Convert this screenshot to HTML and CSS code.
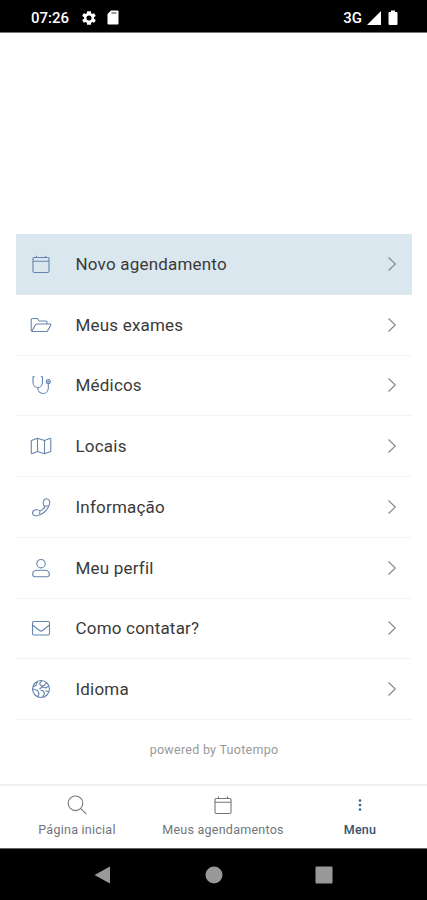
FILE: index.html
```html
<!DOCTYPE html>
<html lang="pt">

<head>
    <meta charset="utf-8" />
    <title>Menu</title>
    <link rel="stylesheet" href="styles.css">
</head>

<body>
    <header class="status-bar">
        <span class="clock">07:26</span>
        <svg class="status-gear" width="16" height="16" viewBox="0 0 24 24">
            <path fill="#fff" fill-rule="evenodd" d="M19.4 13l.1-1-.1-1 2.1-1.600.5-.6-2-3.500-.6-.3-2.500 1-1.700-1L14.900 2h-5.800l-.4 3-1.700 1-2.500-1-.6.3-2 3.500.5.6L4.600 11l-.1 1 .1 1-2.200 1.600-.5.6 2 3.500.6.300 2.500-1 1.700 1 .4 3h5.800l.4-3 1.700-1 2.500 1 .6-.3 2-3.500-.5-.6zM12 15.800a3.800 3.800 0 1 1 0-7.600 3.800 3.800 0 0 1 0 7.600z" />
        </svg>
        <svg class="status-card" width="12" height="15" viewBox="0 0 12 15">
            <path fill="#fff" d="M4 .5h6.500a1 1 0 0 1 1 1v12a1 1 0 0 1-1 1h-9a1 1 0 0 1-1-1V4z" />
            <path stroke="#777" stroke-width="1.5" d="M4.500 3h5" />
        </svg>
        <span class="network">3G</span>
        <svg class="signal" width="14" height="14" viewBox="0 0 14 14"><path fill="#fff" d="M14 0v14H0z" /></svg>
        <svg class="battery" width="10" height="16" viewBox="0 0 10 16"><path fill="#fff" d="M3 .5h4v1.500h1.500a1 1 0 0 1 1 1V14a1 1 0 0 1-1 1h-7a1 1 0 0 1-1-1V3a1 1 0 0 1 1-1H3z" /></svg>
    </header>

    <main class="content">
        <ul class="menu">
            <li class="menu-item active">
                <svg class="icon" viewBox="0 0 24 24"><path d="M5 5.500h14a1 1 0 0 1 1 1V19a1.500 1.500 0 0 1-1.500 1.500h-13A1.500 1.500 0 0 1 4 19V6.500a1 1 0 0 1 1-1zM4 9.300h16M7.500 5.500V3.800M16.500 5.500V3.800" /></svg>
                <span class="label">Novo agendamento</span>
                <svg class="chevron" viewBox="0 0 10 16"><path d="M1.500 1.500L8.300 8l-6.800 6.500" /></svg>
            </li>
            <li class="menu-item">
                <svg class="icon" viewBox="0 0 24 24"><path d="M3.500 18.500a1.500 1.500 0 0 1-1.300-1.500V7A1.500 1.500 0 0 1 3.700 5.500h4.600l2 2.500h6.200A1.500 1.500 0 0 1 18 9.500V11M3 18L6.300 12a2 2 0 0 1 1.500-1h13c1 0 1.300.7.9 1.400l-2.900 5a2 2 0 0 1-1.700 1.100H3.500" /></svg>
                <span class="label">Meus exames</span>
                <svg class="chevron" viewBox="0 0 10 16"><path d="M1.500 1.500L8.300 8l-6.800 6.500" /></svg>
            </li>
            <li class="menu-item">
                <svg class="icon" viewBox="0 0 24 24"><path d="M5.800 3.800H4V9c0 3.200 2 5.500 4.700 5.500S13.500 12.200 13.500 9V3.800h-1.800M8.700 14.500c0 3.600 2.200 6 5.300 6s5.300-2.300 5.300-5.500v-4.500" /><circle cx="19.300" cy="8.500" r="2" /><circle cx="19.300" cy="8.500" r=".5" /></svg>
                <span class="label">Médicos</span>
                <svg class="chevron" viewBox="0 0 10 16"><path d="M1.500 1.500L8.300 8l-6.800 6.500" /></svg>
            </li>
            <li class="menu-item">
                <svg class="icon" viewBox="0 0 24 24"><path d="M2.300 6.500L8.500 4.200l7 2.300 5-2c.8-.3 1.300.1 1.300.9v12.100l-6.300 2.300-7-2.300-5 2c-.8.300-1.200-.1-1.200-.9zM8.500 4.200v13.300M15.500 6.500v13.300" /></svg>
                <span class="label">Locais</span>
                <svg class="chevron" viewBox="0 0 10 16"><path d="M1.500 1.500L8.300 8l-6.800 6.500" /></svg>
            </li>
            <li class="menu-item">
                <svg class="icon" viewBox="0 0 24 24"><path d="M16 11.300c-2.600-.9-2.400-7.500 1.500-7.500 3.400 0 3.800 3.500 2.600 6.500-2 5-5.300 8.300-10.300 9.900-3.400 1.100-6.300.5-6.300-2.200 0-3.700 6-4.100 7.500-2 2.300-.9 4.200-2.500 5-4.700zM16 11.300l2.800-.6M11 16l-.5 2.800" /></svg>
                <span class="label">Informação</span>
                <svg class="chevron" viewBox="0 0 10 16"><path d="M1.500 1.500L8.300 8l-6.800 6.500" /></svg>
            </li>
            <li class="menu-item">
                <svg class="icon" viewBox="0 0 24 24"><circle cx="12" cy="7.700" r="4.200" /><path d="M8.500 14.300h7c2.800 0 4.800 1.600 4.800 4 0 1.500-.8 2.400-2.300 2.400H6c-1.500 0-2.300-.9-2.300-2.400 0-2.400 2-4 4.800-4z" /></svg>
                <span class="label">Meu perfil</span>
                <svg class="chevron" viewBox="0 0 10 16"><path d="M1.500 1.500L8.300 8l-6.800 6.500" /></svg>
            </li>
            <li class="menu-item">
                <svg class="icon" viewBox="0 0 24 24"><rect x="3.500" y="5.500" width="17" height="13.500" rx="1.200" /><path d="M3.500 9l7 5.500c1 .8 2 .8 3 0l7-5.500" /></svg>
                <span class="label">Como contatar?</span>
                <svg class="chevron" viewBox="0 0 10 16"><path d="M1.500 1.500L8.300 8l-6.800 6.500" /></svg>
            </li>
            <li class="menu-item">
                <svg class="icon" viewBox="0 0 24 24"><circle cx="12" cy="12" r="8.500" /><path d="M8.500 4.500L7.300 8l-3 2M4 12l4.500 1.500 1.500 3-1.200 3.500M13 3.600l-2.500 3 2 2.600 3-1 2-3M10.500 12l3-2.300 3 1.300 3.500-2M11.500 13l3 1 1 3-2.500 3M16.500 13.500l3.500 1.500" /></svg>
                <span class="label">Idioma</span>
                <svg class="chevron" viewBox="0 0 10 16"><path d="M1.500 1.500L8.300 8l-6.800 6.500" /></svg>
            </li>
        </ul>
        <p class="powered">powered by Tuotempo</p>
    </main>

    <nav class="tabs">
        <a class="tab tab-home">
            <svg class="tab-icon" viewBox="0 0 24 24"><circle cx="10.500" cy="10.300" r="7.300" /><path d="M15.800 15.600l5.500 5.500" /></svg>
            <span>Página inicial</span>
        </a>
        <a class="tab tab-agenda">
            <svg class="tab-icon" viewBox="0 0 24 24"><path d="M5 5.500h14a1 1 0 0 1 1 1V19a1.500 1.500 0 0 1-1.500 1.500h-13A1.500 1.500 0 0 1 4 19V6.500a1 1 0 0 1 1-1zM4 9.300h16M7.500 5.500V3.500M16.500 5.500V3.500" /></svg>
            <span>Meus agendamentos</span>
        </a>
        <a class="tab tab-menu">
            <svg class="tab-dots" viewBox="0 0 24 24"><circle cx="12" cy="7.500" r="1.300" /><circle cx="12" cy="12" r="1.300" /><circle cx="12" cy="16.500" r="1.300" /></svg>
            <span>Menu</span>
        </a>
    </nav>

    <footer class="system-nav">
        <svg class="nav-back" width="16" height="18" viewBox="0 0 16 18"><path d="M16 .5v17L.5 9z" /></svg>
        <svg class="nav-home" width="18" height="18" viewBox="0 0 18 18"><circle cx="9" cy="9" r="8.500" /></svg>
        <svg class="nav-recent" width="18" height="18" viewBox="0 0 18 18"><rect x=".5" y=".5" width="17" height="17" rx="1" /></svg>
    </footer>
</body>

</html>
```
FILE: styles.css
```css
* {
    box-sizing: border-box;
}

body {
    display: flex;
    flex-direction: column;
    height: 900px;
    margin: 0;
    font-family: Roboto, sans-serif;
    background-color: #fff;
    color: #3a3a3a;
}

.status-bar {
    display: flex;
    align-items: center;
    height: 33px;
    padding: 3px 29px 0 31px;
    background-color: #000;
    border-bottom: 1px solid #777;
    color: #fff;
    font-size: 15px;
    font-weight: 500;
}

.clock {
    width: 50px;
}

.status-card {
    margin-left: 10px;
}

.network {
    margin-left: auto;
}

.signal {
    margin-left: 5px;
}

.battery {
    margin-left: 7px;
}

.content {
    flex: 1;
    padding: 201px 15px 0 16px;
}

.menu {
    list-style: none;
    margin: 0;
    padding: 0;
}

.menu-item {
    display: flex;
    align-items: center;
    height: 60.75px;
    padding: 0 15.5px 0 12.5px;
    border-bottom: 1px solid #f3f3f3;
}

.menu-item.active {
    background-color: #dae7ee;
    border-bottom-color: #e2ecf1;
}

.icon {
    width: 24px;
    height: 24px;
    fill: none;
    stroke: #6685ad;
    stroke-width: 1.1;
    stroke-linejoin: round;
}

.label {
    flex: 1;
    margin-left: 23px;
    font-size: 17px;
    letter-spacing: 0.2px;
}

.chevron {
    width: 10px;
    height: 16px;
    fill: none;
    stroke: #858585;
    stroke-width: 1.1;
}

.powered {
    margin: 22px 0 0;
    text-align: center;
    font-size: 12.5px;
    letter-spacing: 0.27px;
    line-height: 16px;
    color: #999;
}

.tabs {
    display: flex;
    height: 64px;
    padding: 0 0 0 4px;
    border-top: 2px solid #f0f0f0;
    font-size: 12.5px;
    letter-spacing: 0.25px;
    color: #70757a;
}

.tab {
    display: flex;
    flex-direction: column;
    align-items: center;
    padding-top: 7px;
    line-height: 15px;
}

.tab-home,
.tab-agenda {
    width: 146px;
}

.tab-menu {
    width: 128px;
    color: #35516b;
    font-weight: 500;
}

.tab-icon,
.tab-dots {
    width: 24px;
    height: 24px;
    margin-bottom: 5px;
}

.tab-icon {
    fill: none;
    stroke: #777;
    stroke-width: 1.1;
}

.tab-dots {
    fill: #35648a;
}

.system-nav {
    display: flex;
    align-items: center;
    height: 52px;
    padding: 0 0 0 94px;
    background-color: #000;
    border-top: 1px solid #666;
    fill: #999;
}

.nav-home {
    margin-left: 95px;
}

.nav-recent {
    margin-left: 92px;
}
```
